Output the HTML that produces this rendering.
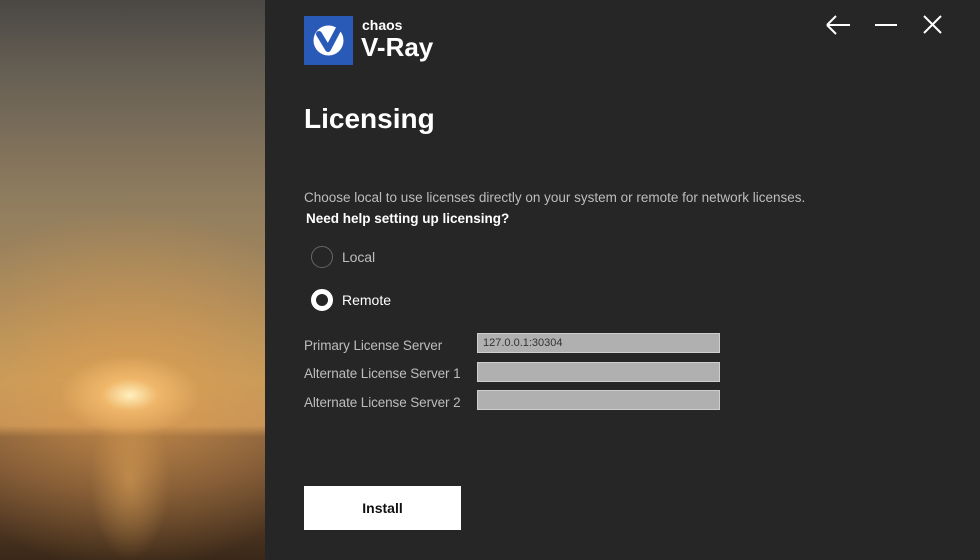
<!DOCTYPE html>
<html><head><style>
*{margin:0;padding:0;box-sizing:border-box}
body{width:980px;height:560px;background:#262626;font-family:"Liberation Sans",sans-serif;position:relative;overflow:hidden}
#img{position:absolute;left:0;top:0;width:265px;height:560px;
background:
radial-gradient(ellipse 40px 80px at 130px 480px,rgba(230,170,90,0.5),rgba(0,0,0,0) 100%),
radial-gradient(ellipse 70px 40px at 130px 395px,rgba(255,240,190,1),rgba(255,200,120,0.6) 40%,rgba(0,0,0,0) 100%),
radial-gradient(ellipse 220px 180px at 130px 390px,rgba(230,160,80,0.7),rgba(0,0,0,0) 100%),
linear-gradient(180deg,#4a4845 0%,#6a6255 15%,#8f7c5e 35%,#a88a5c 55%,#c09a5c 68%,#c09058 76%,#7a5838 78%,#6a4a30 85%,#3a2818 100%);}
.t{position:absolute;color:#fff}
.inp{position:absolute;left:477px;width:243px;height:20px;background:#b0b0b0;border:1px solid #cfcfcf;font-size:11px;color:#333;padding:3px 5px}
.lbl{position:absolute;left:304px;font-size:13.5px;color:#bdbdbd;letter-spacing:-0.1px}
</style></head><body>
<div id="img"></div>
<div style="position:absolute;left:304px;top:16px;width:49px;height:49px;background:#2a5ab8"></div>
<svg style="position:absolute;left:304px;top:16px" width="49" height="49" viewBox="0 0 49 49"><circle cx="24.5" cy="24.5" r="15" fill="#fff"/><path d="M15 18 L24 33 L34 14" stroke="#2a5ab8" stroke-width="6" fill="none" stroke-linecap="round" stroke-linejoin="round"/></svg>
<div class="t" style="left:362px;top:17px;font-size:14px;font-weight:bold">chaos</div>
<div class="t" style="left:361px;top:32px;font-size:26px;font-weight:bold">V-Ray</div>
<svg style="position:absolute;left:824px;top:14px" width="150" height="24"><g stroke="#fff" stroke-width="2" fill="none"><path d="M3 11 H26 M3 11 L12 2 M3 11 L12 20"/><path d="M51 11 H73"/><path d="M100 2 L117 19 M117 2 L100 19"/></g></svg>
<div class="t" style="left:304px;top:103px;font-size:28px;font-weight:bold">Licensing</div>
<div style="position:absolute;left:304px;top:190px;font-size:13.5px;color:#bdbdbd">Choose local to use licenses directly on your system or remote for network licenses.</div>
<div class="t" style="left:306px;top:211px;font-size:13.5px;font-weight:bold">Need help setting up licensing?</div>
<div style="position:absolute;left:311px;top:246px;width:22px;height:22px;border:1.5px solid #666;border-radius:50%"></div>
<div class="lbl" style="left:342px;top:249px;font-size:14px">Local</div>
<div style="position:absolute;left:311px;top:289px;width:22px;height:22px;border:5px solid #fff;border-radius:50%"></div>
<div class="t" style="left:342px;top:292px;font-size:14px">Remote</div>
<div class="lbl" style="top:338px">Primary License Server</div>
<div class="lbl" style="top:366px">Alternate License Server 1</div>
<div class="lbl" style="top:395px">Alternate License Server 2</div>
<div class="inp" style="top:333px">127.0.0.1:30304</div>
<div class="inp" style="top:362px"></div>
<div class="inp" style="top:390px"></div>
<div style="position:absolute;left:304px;top:486px;width:157px;height:44px;background:#fff;color:#111;font-size:14px;font-weight:bold;text-align:center;line-height:44px">Install</div>
</body></html>
